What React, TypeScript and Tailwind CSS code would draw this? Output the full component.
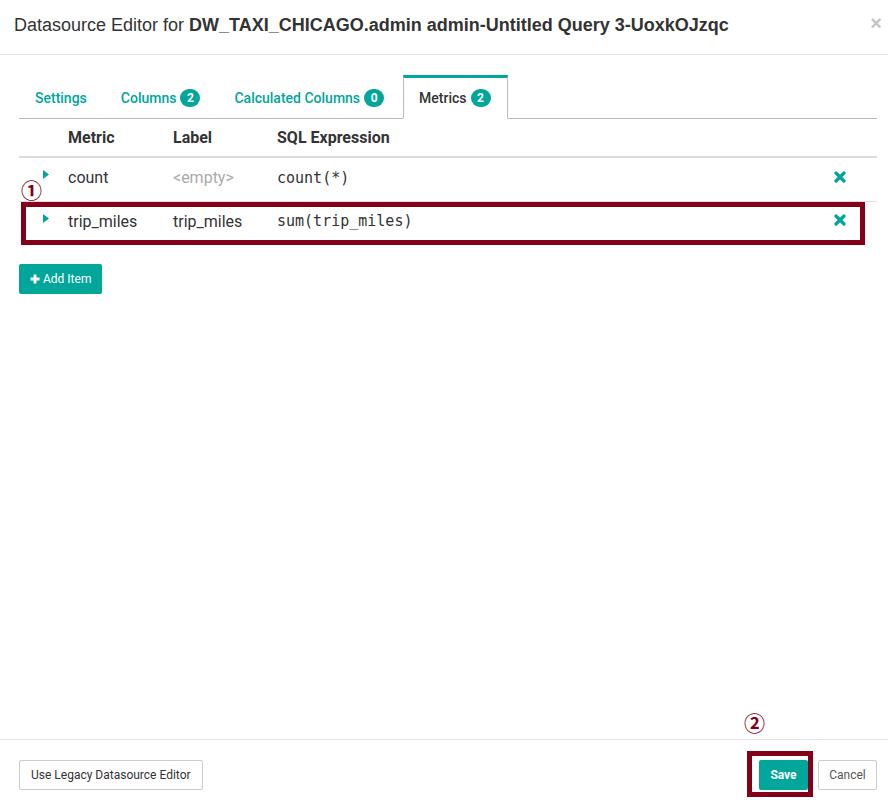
import React from "react";

const TEAL = "#00a699";

function Badge({ n }: { n: number }) {
  return (
    <span className="ml-[4px] inline-flex h-[18px] min-w-[20px] items-center justify-center rounded-full bg-[#00a699] px-[6px] text-[12px] font-bold leading-none text-white">
      {n}
    </span>
  );
}

function Caret() {
  return (
    <svg width="6" height="9" viewBox="0 0 6 9" className="block">
      <path d="M0 0 L6 4.5 L0 9 Z" fill={TEAL} />
    </svg>
  );
}

function RemoveIcon() {
  return (
    <svg width="12" height="12" viewBox="0 0 12 12" className="block">
      <path
        d="M2 2 L10 10 M10 2 L2 10"
        stroke={TEAL}
        strokeWidth="3.2"
        strokeLinecap="round"
      />
    </svg>
  );
}

const tabs = [
  { label: "Settings" },
  { label: "Columns", badge: 2 },
  { label: "Calculated Columns", badge: 0 },
  { label: "Metrics", badge: 2, active: true },
];

const metrics = [
  { metric: "count", label: "", expr: "count(*)" },
  { metric: "trip_miles", label: "trip_miles", expr: "sum(trip_miles)" },
];

export default function App() {
  return (
    <div className="flex h-[801px] w-[888px] flex-col bg-white font-['Roboto',sans-serif] text-[#333]">
      {/* header */}
      <div className="flex h-[55px] items-center justify-between border-b border-[#e5e5e5] pl-[14px] pr-[6px]">
        <h4 className="pb-[4px] font-['Liberation_Sans',Arial,sans-serif] text-[18px] text-[#333]">
          Datasource Editor for{" "}
          <span className="font-bold">
            DW_TAXI_CHICAGO.admin admin-Untitled Query 3-UoxkOJzqc
          </span>
        </h4>
        <span className="pb-[8px] font-['Liberation_Sans',Arial,sans-serif] text-[20px] font-bold leading-none text-[#c4c4c4]">
          ×
        </span>
      </div>

      {/* body */}
      <div className="relative flex-1 pl-[19px] pr-[11px] pt-[20px]">
        <div className="flex border-b border-[#bbb]">
          {tabs.map((t) => (
            <div
              key={t.label}
              className={
                t.active
                  ? "-mb-px ml-[1px] mr-[2px] flex h-[44px] items-center border-x border-t-[3px] border-b border-x-[#bbb] border-t-[#00a699] border-b-white bg-white px-[15px] pr-[16px] text-[14px] font-medium text-[#333]"
                  : "mr-[2px] flex h-[43px] items-center border-t-[3px] border-transparent px-[16px] text-[14px] font-medium text-[#00a699]"
              }
            >
              {t.label}
              {t.badge !== undefined && <Badge n={t.badge} />}
            </div>
          ))}
        </div>

        {/* table header */}
        <div className="flex h-[39px] items-center border-b-2 border-[#ddd] text-[16px] font-bold text-[#333]">
          <div className="w-[49px]" />
          <div className="w-[105px]">Metric</div>
          <div className="w-[104px]">Label</div>
          <div className="flex-1">SQL Expression</div>
        </div>

        {/* rows */}
        {metrics.map((m, i) => (
          <div
            key={m.metric}
            className={
              i === 0
                ? "relative flex h-[44px] border-b border-[#ddd] pb-[3px] text-[16px]"
                : "relative flex h-[43px] pb-[4px] text-[16px]"
            }
          >
            <div className="w-[49px] pl-[24px] pt-[12px]">
              <Caret />
            </div>
            <div className="flex w-[105px] items-center">{m.metric}</div>
            <div className="flex w-[104px] items-center">
              {m.label ? m.label : <span className="text-[#aaa]">&lt;empty&gt;</span>}
            </div>
            <div className="flex flex-1 items-center font-['DejaVu_Sans_Mono',monospace] text-[15px]">
              {m.expr}
            </div>
            <div className="flex w-[43px] items-center pb-[3px]">
              <RemoveIcon />
            </div>
            {i === 0 && (
              <span className="absolute left-[2px] top-[21px] font-['Noto_Sans_CJK_JP',sans-serif] text-[21px] font-bold leading-none text-[#840018]">
                ①
              </span>
            )}
            {i === 1 && (
              <div className="pointer-events-none absolute left-[2px] top-0 h-[43px] w-[844px] border-[5px] border-[#840018]" />
            )}
          </div>
        ))}

        <button className="mt-[19px] flex h-[30px] items-center gap-[3px] rounded-[2px] bg-[#00a699] pl-[11px] pr-[11px] text-[12px] text-white">
          <svg width="10" height="10" viewBox="0 0 10 10">
            <path d="M5 0.5 V9.5 M0.5 5 H9.5" stroke="white" strokeWidth="2.8" />
          </svg>
          Add Item
        </button>

        <span className="absolute bottom-[6px] left-[744px] font-['Noto_Sans_CJK_JP',sans-serif] text-[21px] font-bold leading-none text-[#840018]">
          ②
        </span>
      </div>

      {/* footer */}
      <div className="flex items-start justify-between border-t border-[#e5e5e5] pb-[11px] pl-[19px] pr-[11px] pt-[20px]">
        <button className="h-[30px] rounded-[2px] border border-[#ccc] bg-white px-[11px] text-[12px] text-[#333]">
          Use Legacy Datasource Editor
        </button>
        <div className="flex items-center">
          <div className="relative">
            <button className="h-[30px] w-[49px] rounded-[2px] bg-[#00a699] text-[12px] font-bold text-white">
              Save
            </button>
            <div className="pointer-events-none absolute left-[-12px] top-[-9px] h-[46px] w-[66px] border-[5px] border-[#840018]" />
          </div>
          <button className="ml-[10px] h-[30px] w-[59px] rounded-[2px] border border-[#ccc] bg-white text-[12px] text-[#555]">
            Cancel
          </button>
        </div>
      </div>
    </div>
  );
}
